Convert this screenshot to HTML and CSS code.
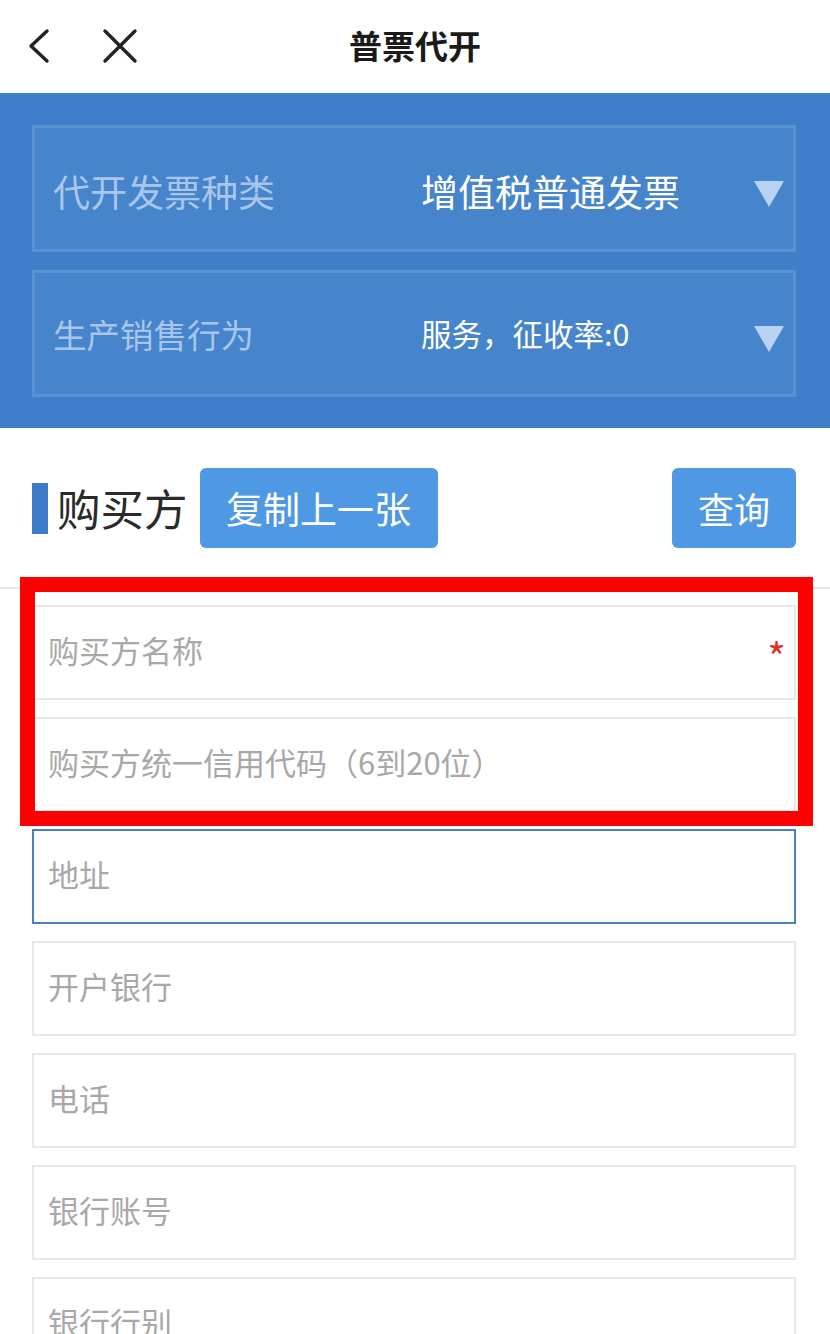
FILE: index.html
```html
<!DOCTYPE html>
<html lang="zh-CN">
<head>
<meta charset="utf-8">
<title>普票代开</title>
<link rel="stylesheet" href="styles.css">
</head>
<body>
<div class="page">
  <header class="topbar">
    <div class="nav-left">
      <svg class="icon-back" width="26" height="36" viewBox="0 0 26 36"><path d="M21 3 L5 18 L21 33" fill="none" stroke="#222" stroke-width="3.4" stroke-linecap="round" stroke-linejoin="round"/></svg>
      <svg class="icon-close" width="36" height="36" viewBox="0 0 36 36"><path d="M3 3 L33 33 M33 3 L3 33" fill="none" stroke="#222" stroke-width="3.4" stroke-linecap="round"/></svg>
    </div>
    <h1 class="title">普票代开</h1>
    <div class="nav-right"></div>
  </header>

  <section class="panel">
    <div class="select-box big">
      <span class="sel-label">代开发票种类</span>
      <span class="sel-value">增值税普通发票</span>
      <span class="tri"></span>
    </div>
    <div class="select-box small">
      <span class="sel-label">生产销售行为</span>
      <span class="sel-value">服务，征收率:0</span>
      <span class="tri"></span>
    </div>
  </section>

  <div class="sec-head">
    <div class="sec-title"><span class="bar"></span>购买方</div>
    <button class="btn btn-copy">复制上一张</button>
    <button class="btn btn-query">查询</button>
  </div>
  <div class="divider"></div>

  <div class="fields">
    <div class="field"><span class="ph">购买方名称</span><span class="req">*</span></div>
    <div class="field"><span class="ph">购买方统一信用代码（6到20位）</span></div>
    <div class="field focus"><span class="ph">地址</span></div>
    <div class="field"><span class="ph">开户银行</span></div>
    <div class="field"><span class="ph">电话</span></div>
    <div class="field"><span class="ph">银行账号</span></div>
    <div class="field"><span class="ph">银行行别</span></div>
  </div>

  <div class="highlight"></div>
</div>
</body>
</html>
```
FILE: styles.css
```css
* { box-sizing: border-box; }
html, body { margin: 0; padding: 0; background: #fff; }
body {
  font-family: "Noto Sans CJK SC", "Noto Sans", sans-serif;
  width: 830px;
  overflow: hidden;
}
.page { position: relative; width: 830px; }

.topbar {
  height: 93px;
  display: grid;
  grid-template-columns: 1fr auto 1fr;
  align-items: center;
  padding-bottom: 2px;
}
.nav-left { display: flex; align-items: center; padding-left: 26px; gap: 50px; }
.icon-back { display: block; }
.icon-close { display: block; }
.title {
  margin: 0;
  font-size: 33px;
  font-weight: 700;
  color: #1a1a1a;
  line-height: 1;
}

.panel {
  background: #3f7fc9;
  height: 335px;
  padding: 32px 34px 0 32px;
  display: flex;
  flex-direction: column;
  gap: 18px;
}
.select-box {
  height: 127px;
  border: 3px solid rgba(255,255,255,0.11);
  background: rgba(255,255,255,0.04);
  display: grid;
  grid-template-columns: 368px 1fr auto;
  align-items: center;
  padding: 0 9px 0 18px;
}
.sel-label { color: #a8c6ec; line-height: 1; }
.sel-value { color: #fff; line-height: 1; }
.big .sel-label, .big .sel-value { font-size: 37px; margin-top: 6px; }
.small .sel-label { font-size: 33.5px; }
.small .sel-value { font-size: 30.5px; }
.tri {
  width: 0; height: 0;
  border-left: 15px solid transparent;
  border-right: 15px solid transparent;
  border-top: 26px solid #b7d3f1;
  margin-top: 10px;
}

.sec-head {
  display: flex;
  align-items: center;
  padding: 40px 34px 0 32px;
  height: 120px;
}
.sec-title {
  display: flex;
  align-items: center;
  font-size: 43.5px;
  color: #2a2a2a;
  line-height: 1;
  gap: 9px;
  margin-right: 12px;
}
.bar { width: 16px; height: 51px; background: #3d7cc8; display: block; }
.btn {
  height: 80px;
  border: 0;
  border-radius: 6px;
  background: #4e98e4;
  color: #fff;
  font-family: inherit;
  font-size: 37px;
  line-height: 1;
  padding: 0;
}
.btn-copy { width: 238px; }
.btn-query { width: 124px; margin-left: auto; font-size: 36px; }

.divider { height: 2px; background: #e8e8e8; margin-top: 39px; }

.fields {
  display: flex;
  flex-direction: column;
  gap: 17px;
  padding: 16px 34px 0 32px;
}
.field {
  height: 95px;
  border: 2px solid #e8e8e8;
  display: flex;
  align-items: center;
  justify-content: space-between;
  padding: 0 8px 0 14px;
}
.field.focus { border-color: #4a80c2; }
.ph { font-size: 31px; color: #a8a8a8; line-height: 1; margin-top: -7px; }
.req { color: #d8352a; font-size: 40px; line-height: 1; margin-top: 6px; }

.highlight {
  position: absolute;
  left: 20px;
  top: 577px;
  width: 793px;
  height: 249px;
  border: 15px solid #ff0000;
}
```
